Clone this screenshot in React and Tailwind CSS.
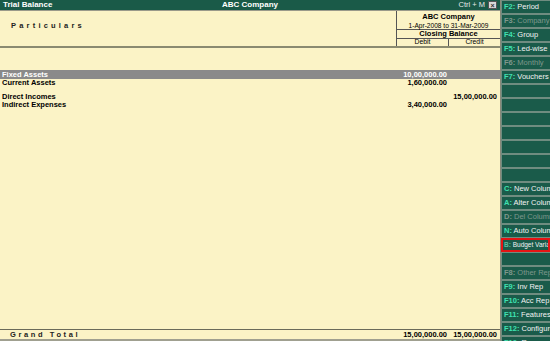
import React from "react";

const sideButtons = [
  { k: "F2", l: "Period" },
  { k: "F3", l: "Company", dis: true },
  { k: "F4", l: "Group" },
  { k: "F5", l: "Led-wise" },
  { k: "F6", l: "Monthly", dis: true },
  { k: "F7", l: "Vouchers" },
  {}, {}, {}, {}, {}, {}, {},
  { k: "C", l: "New Column" },
  { k: "A", l: "Alter Column" },
  { k: "D", l: "Del Column", dis: true },
  { k: "N", l: "Auto Column" },
  { k: "B", l: "Budget Variance", red: true },
  {},
  { k: "F8", l: "Other Reports", dis: true },
  { k: "F9", l: "Inv Rep" },
  { k: "F10", l: "Acc Rep" },
  { k: "F11", l: "Features" },
  { k: "F12", l: "Configure" },
  { k: "F12", l: "Range" },
];

function SideBtn({ b }) {
  return (
    <div
      className={
        "h-[14px] shrink-0 flex items-center whitespace-nowrap overflow-hidden bg-[#1a5b4a] " +
        (b.red
          ? "border-2 border-[#e41414] pl-[1px]"
          : "border-y border-l border-[#6f8c80] pl-[2px]")
      }
    >
      {b.k && (
        <span className={b.red ? "text-[6.5px] leading-none" : "text-[7.5px] leading-none"}>
          <span className={"font-bold " + (b.dis ? "text-[#7f978c]" : b.red ? "text-[#5fb89a]" : "text-[#3fe0b0]")}>{b.k}:</span>
          <span className={b.dis ? "text-[#7f978c]" : "text-[#f2f2f2]"}> {b.l}</span>
        </span>
      )}
    </div>
  );
}

function Row({ name, debit, credit, hl }) {
  return (
    <div
      className={
        "flex h-[8.5px] items-center text-[7.5px] font-bold leading-none " +
        (hl ? "bg-[#8a8a8a] text-white" : "text-black")
      }
    >
      <div className="flex-1 pl-[2px]">{name}</div>
      <div className="w-[52px] text-right pr-[2px]">{debit}</div>
      <div className="w-[51px] text-right pr-[3px]">{credit}</div>
    </div>
  );
}

export default function App() {
  return (
    <div className="flex w-[550px] h-[341px] overflow-hidden bg-[#fbf3c6] [font-family:'Liberation_Sans',Arial,sans-serif]">
      <div className="flex flex-col w-[501px] h-full border-r border-[#8a8a7a]">
        <div className="h-[10px] shrink-0 bg-[#1a5a48] grid grid-cols-[1fr_auto_1fr] items-center text-white text-[8px] leading-none px-[3px]">
          <span className="font-bold">Trial Balance</span>
          <span className="font-bold">ABC Company</span>
          <span className="flex justify-end items-center gap-[3px] text-[#e8e8e8]">
            <span className="text-[7.5px]">Ctrl + M</span>
            <span className="w-[9px] h-[8px] bg-[#d8d8d8] border border-[#555] flex items-center justify-center text-[7px] leading-none text-[#333] font-bold">
              ×
            </span>
          </span>
        </div>
        <div className="h-[38px] shrink-0 flex border-t border-[#9a9a8a] border-b-2 border-b-[#8a8a70]">
          <div className="flex-1 pl-[11px] pt-[11px] text-[7.5px] font-bold tracking-[3.2px] text-[#222] leading-none">
            Particulars
          </div>
          <div className="w-[104px] flex flex-col border-l border-[#555]">
            <div className="h-[19px] flex flex-col items-center justify-center leading-[9px] pt-[1px] border-b border-[#555]">
              <span className="text-[7.5px] font-bold">ABC Company</span>
              <span className="text-[6.6px]">1-Apr-2008 to 31-Mar-2009</span>
            </div>
            <div className="h-[9px] flex items-center justify-center text-[7.5px] font-bold leading-none border-b border-[#555]">
              Closing Balance
            </div>
            <div className="flex-1 flex text-[6.8px] leading-none">
              <div className="w-[52px] flex items-center justify-center border-r border-[#555]">Debit</div>
              <div className="flex-1 flex items-center justify-center">Credit</div>
            </div>
          </div>
        </div>
        <div className="flex-1 flex flex-col pt-[22px]">
          <Row name="Fixed Assets" debit="10,00,000.00" hl />
          <Row name="Current Assets" debit="1,60,000.00" />
          <div className="h-[5px]" />
          <Row name="Direct Incomes" credit="15,00,000.00" />
          <Row name="Indirect Expenses" debit="3,40,000.00" />
        </div>
        <div className="h-[12px] shrink-0 flex items-center border-t border-[#6a6a5a] border-b-2 border-b-[#a0a090] text-[7.5px] font-bold leading-none">
          <div className="flex-1 pl-[10px] tracking-[2.6px] text-[#222]">Grand Total</div>
          <div className="w-[52px] text-right pr-[2px]">15,00,000.00</div>
          <div className="w-[51px] text-right pr-[3px]">15,00,000.00</div>
        </div>
      </div>
      <div className="w-[49px] flex flex-col bg-[#1a5b4a]">
        {sideButtons.map((b, i) => (
          <SideBtn key={i} b={b} />
        ))}
      </div>
    </div>
  );
}
